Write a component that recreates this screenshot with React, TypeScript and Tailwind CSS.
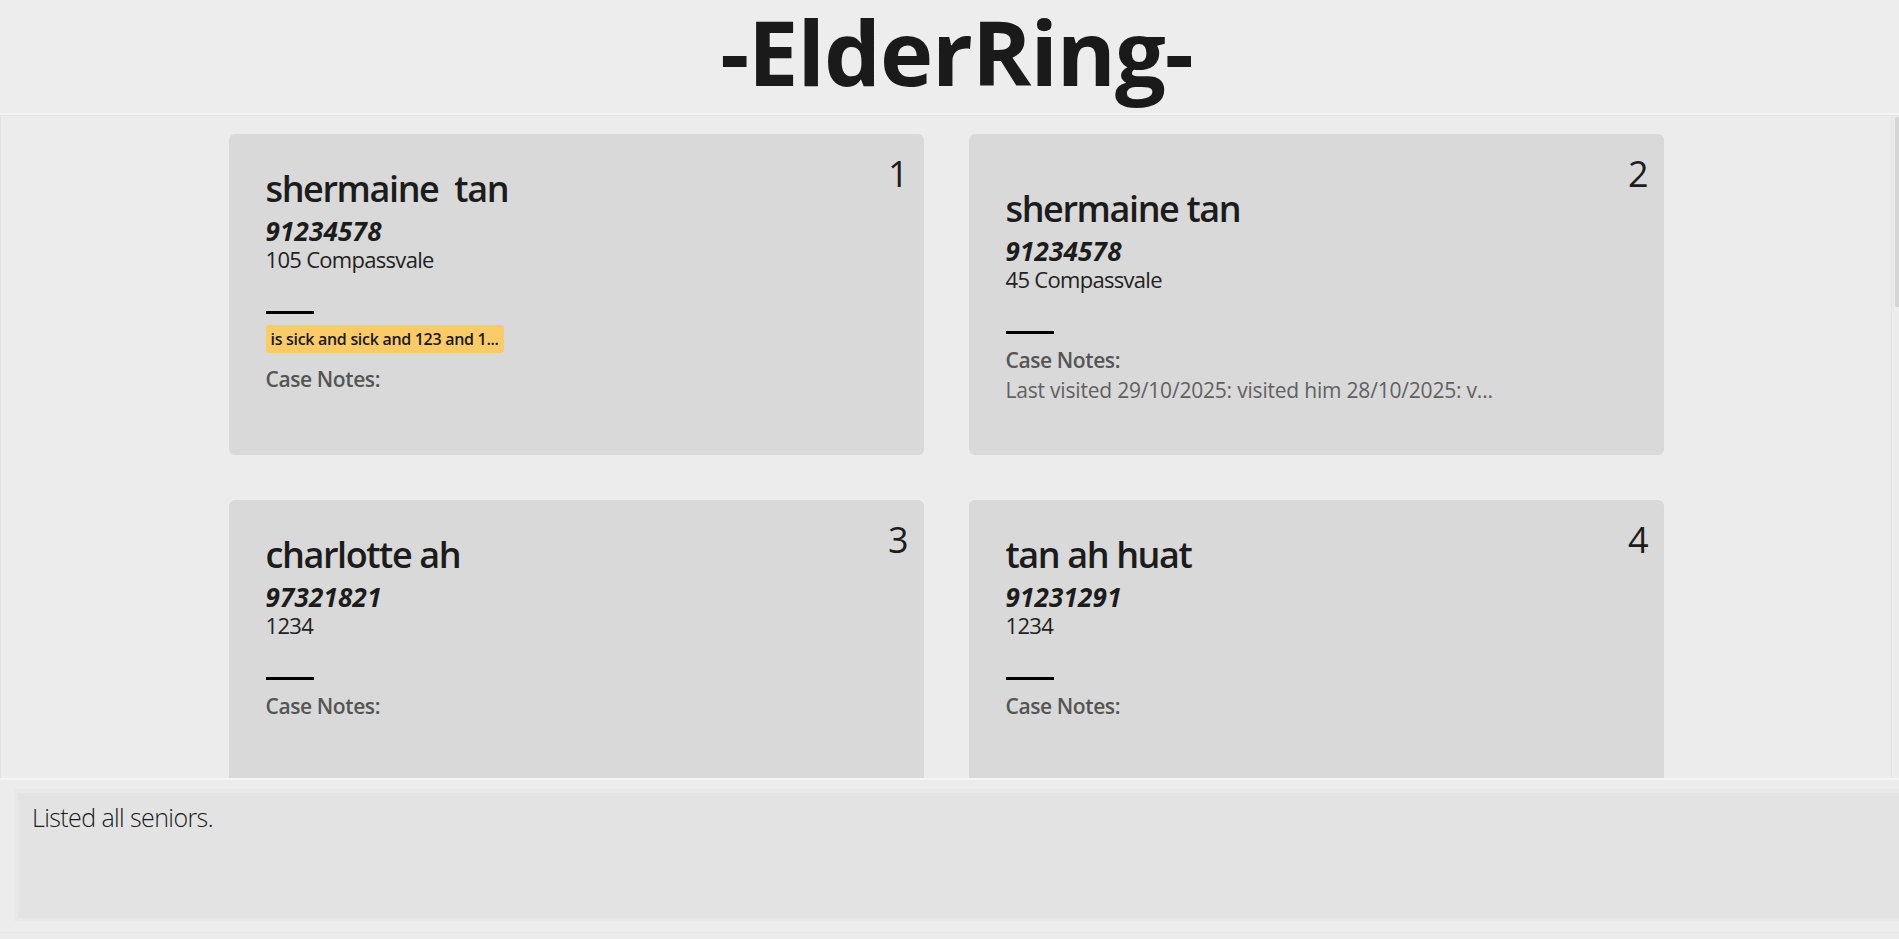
import React from "react";

type Senior = {
  idx: number;
  name: string;
  phone: string;
  address: string;
  tag?: string;
  notes?: string;
};

const seniors: Senior[] = [
  { idx: 1, name: "shermaine\u00a0\u00a0tan", phone: "91234578", address: "105 Compassvale", tag: "is sick and sick and 123 and 1..." },
  { idx: 2, name: "shermaine tan", phone: "91234578", address: "45 Compassvale", notes: "Last visited 29/10/2025: visited him 28/10/2025: v..." },
  { idx: 3, name: "charlotte ah", phone: "97321821", address: "1234" },
  { idx: 4, name: "tan ah huat", phone: "91231291", address: "1234" },
];

function Card({ s }: { s: Senior }) {
  return (
    <div className="relative h-[321px] rounded-[6px] bg-[#d9d9d9] pl-[37px]">
      <div className="absolute right-[15px] top-[22px] text-[36px] leading-none text-[#1c1c1c]">{s.idx}</div>
      <div className={s.notes ? "flex flex-col items-start pt-[57px]" : "flex flex-col items-start pt-[37px]"}>
        <div className="text-[36px] leading-none font-semibold tracking-[-1.4px] text-[#1c1c1c]">{s.name}</div>
        <div className="mt-[11px] text-[26px] leading-none font-bold italic tracking-[0.2px] text-[#1c1c1c]">{s.phone}</div>
        <div className="mt-[4px] text-[22px] leading-none tracking-[-0.7px] text-[#222]">{s.address}</div>
        <div className="mt-[41px] h-[3px] w-[48px] bg-black" />
        {s.tag ? (
          <div className="mt-[11px] flex h-[28px] items-center rounded-[3px] bg-[#fbcb67] px-[5px] text-[16px] font-semibold tracking-[-0.3px] text-[#1a1a1a]">
            {s.tag}
          </div>
        ) : null}
        <div className="mt-[16px] text-[21px] leading-none font-semibold tracking-[-0.4px] text-[#555555]">Case Notes:</div>
        {s.notes ? (
          <div className="mt-[9px] text-[21px] leading-none tracking-[-0.2px] text-[#616161]">{s.notes}</div>
        ) : null}
      </div>
    </div>
  );
}

export default function App() {
  return (
    <div className="flex h-[939px] w-full flex-col overflow-hidden bg-[#ececec] font-['Open_Sans',sans-serif]">
      <header className="flex h-[113px] shrink-0 justify-center bg-[#ededed] pl-[14px]">
        <h1 className="text-[90px] leading-[1.15] font-bold tracking-[-1px] text-[#1a1a1a]">-ElderRing-</h1>
      </header>
      <div className="h-[2px] shrink-0 bg-[#f5f5f5]" />
      <div className="flex h-[663px] shrink-0 border-t border-l border-[#e3e3e3] bg-[#ececec]">
        <div className="flex flex-1 justify-center overflow-hidden pt-[18px]">
          <div className="grid grid-cols-[695px_695px] gap-[45px]">
            {seniors.map((s) => (
              <Card key={s.idx} s={s} />
            ))}
          </div>
        </div>
        <div className="relative w-[8px] shrink-0 border-l border-[#e4e4e4]">
          <div className="absolute left-[3px] top-[1px] h-[190px] w-[6px] rounded-[2px] bg-[#d5d5d5]" />
        </div>
      </div>
      <div className="h-[2px] shrink-0 bg-[#f5f5f5]" />
      <div className="h-[152px] shrink-0 pt-[9px] pl-[14px]">
        <div className="h-[132px] border-t-4 border-b-[3px] border-l-4 border-[#e8e8e8] bg-[#e3e3e3] pt-[12px] pl-[14px]">
          <div className="text-[25px] leading-none font-light tracking-[-0.6px] text-[#1a1a1a]">Listed all seniors.</div>
        </div>
      </div>
      <div className="flex-1 border-t border-[#e6e6e6] bg-[#ececec]" />
    </div>
  );
}
